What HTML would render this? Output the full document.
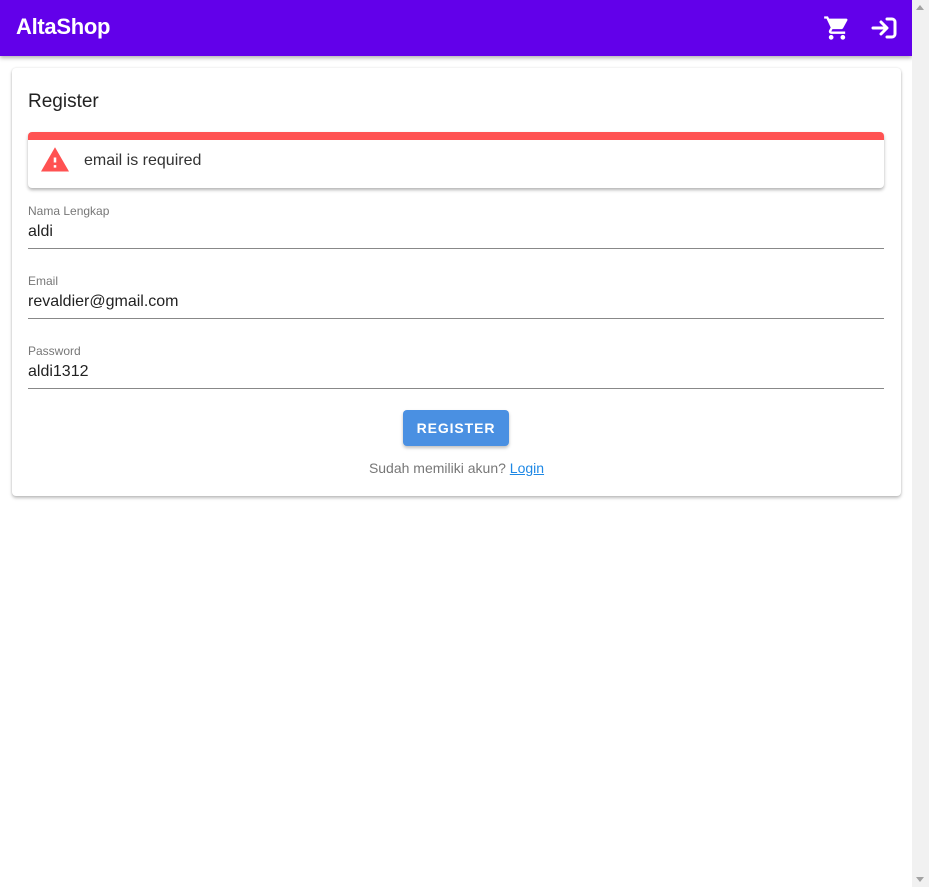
<!DOCTYPE html>
<html><head><style>
*{box-sizing:border-box}
body{margin:0;width:929px;height:887px;overflow:hidden;font-family:"Liberation Sans",sans-serif;background:#fff;position:relative}
.sb{position:absolute;right:0;top:0;width:17px;height:887px;background:#f1f1f1}
.bar{position:absolute;left:0;top:0;width:912px;height:56px;background:#6200ea;box-shadow:0 2px 4px rgba(0,0,0,.3)}
.logo{position:absolute;left:16px;top:14px;color:#fff;font-weight:bold;font-size:22px;letter-spacing:-.3px}
.card{position:absolute;left:12px;top:68px;width:889px;height:428px;background:#fff;border-radius:4px;box-shadow:0 2px 3px rgba(0,0,0,.25),0 0 2px rgba(0,0,0,.1)}
.title{position:absolute;left:16px;top:23px;font-size:19px;color:#222}
.alert{position:absolute;left:16px;top:64px;width:856px;height:56px;border-top:8px solid #ff5252;border-radius:4px;box-shadow:0 2px 3px rgba(0,0,0,.3)}
.alert span{position:absolute;left:56px;top:12px;font-size:16px;color:#333}
.f{position:absolute;left:16px;width:856px;border-bottom:1px solid #888}
.f .l{font-size:12px;color:#777;height:17px}
.f .v{font-size:16px;color:#222;height:27px;padding-top:2px}
.btn{position:absolute;left:391px;top:342px;width:106px;height:36px;background:#4a90e2;border-radius:4px;color:#fff;font-weight:bold;font-size:14px;letter-spacing:.9px;text-align:center;line-height:36px;box-shadow:0 2px 3px rgba(0,0,0,.25)}
.lg{position:absolute;left:0;width:889px;top:392px;text-align:center;font-size:14px;color:#777}
.lg a{color:#1e88e5;text-decoration:underline}
</style></head><body>
<div class="bar"><div class="logo">AltaShop</div>
<svg style="position:absolute;left:822px;top:14px" width="30" height="28" viewBox="0 0 24 24"><path fill="#fff" d="M7 18c-1.1 0-2 .9-2 2s.9 2 2 2 2-.9 2-2-.9-2-2-2zM1 2v2h2l3.6 7.59-1.35 2.45c-.16.28-.25.61-.25.96 0 1.1.9 2 2 2h12v-2H7.42c-.14 0-.25-.11-.25-.25l.03-.12.9-1.63h7.450c.75 0 1.41-.41 1.75-1.03l3.58-6.49A1 1 0 0020 4H5.21l-.94-2H1zm16 16c-1.1 0-2 .9-2 2s.9 2 2 2 2-.9 2-2-.9-2-2-2z"/></svg>
<svg style="position:absolute;left:871px;top:16px" width="26" height="24" viewBox="0 0 26 24"><path d="M2 12h13M10 6l6 6-6 6M16 3h5a3 3 0 013 3v12a3 3 0 01-3 3h-5" stroke="#fff" stroke-width="3" fill="none" stroke-linecap="round" stroke-linejoin="round"/></svg>
</div>
<div class="card">
<div class="title">Register</div>
<div class="alert"><svg style="position:absolute;left:13px;top:6px" width="28" height="28" viewBox="1 1 22 22"><path fill="#ff5252" d="M1 21h22L12 2 1 21zm12-3h-2v-2h2v2zm0-4h-2v-4h2v4z"/></svg><span>email is required</span></div>
<div class="f" style="top:136px"><div class="l">Nama Lengkap</div><div class="v">aldi</div></div>
<div class="f" style="top:206px"><div class="l">Email</div><div class="v">revaldier@gmail.com</div></div>
<div class="f" style="top:276px"><div class="l">Password</div><div class="v">aldi1312</div></div>
<div class="btn">REGISTER</div>
<div class="lg">Sudah memiliki akun? <a>Login</a></div>
</div>
<div class="sb"><div style="position:absolute;left:4px;top:5px;border:4px solid transparent;border-bottom:5px solid #a3a3a3;border-top:0"></div><div style="position:absolute;left:4px;bottom:5px;border:4px solid transparent;border-top:5px solid #a3a3a3;border-bottom:0"></div></div>
</body></html>
